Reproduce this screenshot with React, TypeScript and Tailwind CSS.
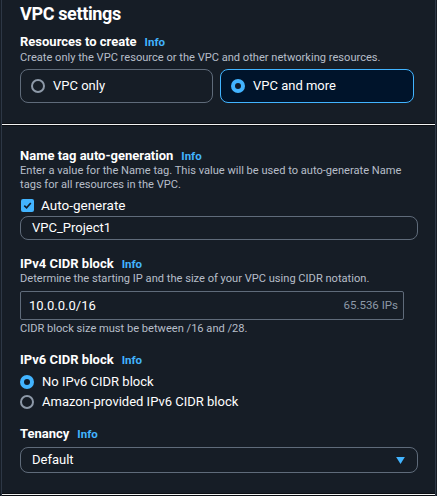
import React from "react";

const Info = () => (
  <span className="ml-[8px] text-[11.5px] font-bold text-[#42b4ff]">Info</span>
);

const Radio = ({ checked }: { checked: boolean }) =>
  checked ? (
    <span className="flex h-[14px] w-[14px] shrink-0 items-center justify-center rounded-full bg-[#42b4ff]">
      <span className="h-[6px] w-[6px] rounded-full bg-[#0f1b2a]" />
    </span>
  ) : (
    <span className="h-[14px] w-[14px] shrink-0 rounded-full border-2 border-[#8d99a8]" />
  );

const Label = ({ children, className }: { children: React.ReactNode; className: string }) => (
  <div className={"flex items-center text-[13px] font-bold leading-[16px] text-white " + className}>
    {children}
    <Info />
  </div>
);

const Sep = () => <div className="h-[3px] border-y border-[#0a0d12] bg-[#f2f3f3]" />;

export default function App() {
  return (
    <div
      className="h-[496px] w-[437px] overflow-hidden bg-[#161d26] text-[#d1d5db]"
      style={{ fontFamily: "Roboto, 'Liberation Sans', sans-serif" }}
    >
      <div className="ml-[1px] mr-[1px] h-full border-l border-r border-[#2d3745] bg-[#161d26]">
        <div className="px-[18px] pb-[20px]">
          <h2 className="pt-[2px] text-[18px] font-bold leading-[24px] tracking-[-0.02em] text-white">
            VPC settings
          </h2>
          <Label className="mt-[8px]">Resources to create</Label>
          <p className="text-[11.1px] leading-[15px] text-[#b6bec9]">
            Create only the VPC resource or the VPC and other networking resources.
          </p>
          <div className="mt-[4px] flex gap-[7px]">
            <div className="flex h-[34px] w-[193px] items-center gap-[8px] rounded-[8px] border border-[#5f6b7a] pl-[10px] text-[13px] text-white">
              <Radio checked={false} />
              VPC only
            </div>
            <div className="flex h-[34px] w-[194px] items-center gap-[8px] rounded-[8px] border border-[#42b4ff] bg-[#00142b] pl-[10px] text-[13px] text-white">
              <Radio checked={true} />
              VPC and more
            </div>
          </div>
        </div>
        <Sep />
        <div className="px-[18px] pt-[22px] pb-[20px]">
          <Label className="">Name tag auto-generation</Label>
          <p className="text-[11.1px] leading-[14px] text-[#b6bec9]">
            Enter a value for the Name tag. This value will be used to auto-generate Name tags for all resources in the VPC.
          </p>
          <div className="mt-[5px] flex items-center gap-[7px] text-[13.5px] leading-[16px] text-white">
            <span className="ml-[1px] flex h-[13px] w-[13px] items-center justify-center rounded-[2px] bg-[#42b4ff]">
              <svg viewBox="0 0 12 12" className="h-[11px] w-[11px]">
                <path d="M2.5 6.2 L5 8.6 L9.6 3.2" fill="none" stroke="#0f1b2a" strokeWidth="1.8" />
              </svg>
            </span>
            Auto-generate
          </div>
          <div className="mt-[3px] flex h-[24px] w-[398px] items-center rounded-[8px] border border-[#5f6b7a] pl-[11px] text-[13px] text-white">
            VPC_Project1
          </div>

          <Label className="mt-[16px]">IPv4 CIDR block</Label>
          <p className="text-[11.1px] leading-[14px] text-[#b6bec9]">
            Determine the starting IP and the size of your VPC using CIDR notation.
          </p>
          <div className="mt-[5px] flex h-[29px] w-[384px] items-center justify-between rounded-[2px] border border-[#5f6b7a] pl-[8px] pr-[5px]">
            <span className="text-[13px] text-white">10.0.0.0/16</span>
            <span className="text-[11.5px] text-[#8d99a8]">65.536 IPs</span>
          </div>
          <p className="mt-[2px] text-[11.1px] leading-[14px] text-[#b6bec9]">
            CIDR block size must be between /16 and /28.
          </p>

          <Label className="mt-[16px]">IPv6 CIDR block</Label>
          <div className="mt-[6px] flex flex-col gap-[5px] text-[13px] leading-[15px] text-white">
            <div className="flex items-center gap-[8px]">
              <Radio checked={true} />
              No IPv6 CIDR block
            </div>
            <div className="flex items-center gap-[8px]">
              <Radio checked={false} />
              Amazon-provided IPv6 CIDR block
            </div>
          </div>

          <Label className="mt-[17px]">Tenancy</Label>
          <div className="mt-[5px] flex h-[26px] w-[398px] items-center justify-between rounded-[8px] border border-[#5f6b7a] pl-[11px] pr-[12px] text-[13px] text-white">
            Default
            <svg viewBox="0 0 10 8" className="h-[7px] w-[9px]">
              <path d="M0 0 H10 L5 8 Z" fill="#42b4ff" />
            </svg>
          </div>
        </div>
        <Sep />
      </div>
    </div>
  );
}
